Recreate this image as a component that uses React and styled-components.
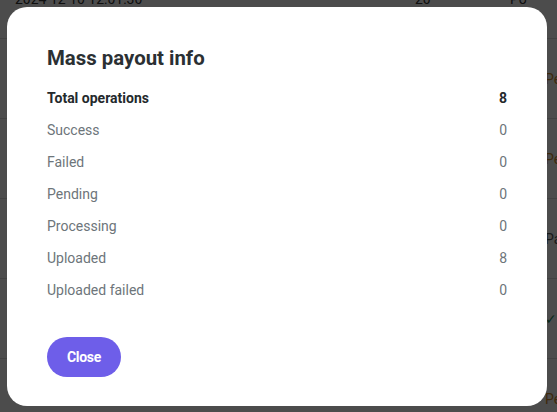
import React from "react";
import styled, { createGlobalStyle } from "styled-components";

const Global = createGlobalStyle`
  html, body { margin: 0; padding: 0; background: #fff; }
  body { font-family: Roboto, "Liberation Sans", Arial, sans-serif; overflow: hidden; }
  * { box-sizing: border-box; }
`;

const Page = styled.div`
  width: 557px;
  height: 412px;
  overflow: hidden;
`;

const Table = styled.div`
  margin-top: -41px;
  display: flex;
  flex-direction: column;
`;

const BgRow = styled.div`
  height: 80px;
  border-bottom: 1px solid #dcdcdc;
  display: grid;
  grid-template-columns: 400px 130px 1fr;
  align-items: center;
  padding-left: 15px;
  font-size: 14px;
  color: #333;
  white-space: nowrap;
`;

const Status = styled.span`
  color: ${(p) => p.$color || "#333"};
  margin-left: ${(p) => p.$shift || 0}px;
`;

const Overlay = styled.div`
  position: fixed;
  inset: 0;
  background: rgba(0, 0, 0, 0.7);
  display: flex;
  padding: 7px 10px 6px 7px;
`;

const Modal = styled.div`
  flex: 1;
  background: #fff;
  border-radius: 20px;
  padding: 39px 40px 29px 40px;
  display: flex;
  flex-direction: column;
  align-items: flex-start;
`;

const Title = styled.h2`
  margin: 0 0 12px;
  font-size: 20.4px;
  line-height: 24px;
  font-weight: 700;
  color: #2b3033;
`;

const List = styled.div`
  align-self: stretch;
  display: flex;
  flex-direction: column;
`;

const Row = styled.div`
  height: 32px;
  display: flex;
  align-items: center;
  justify-content: space-between;
  font-size: 14px;
  font-weight: ${(p) => (p.$bold ? 700 : 400)};
  color: ${(p) => (p.$bold ? "#24292c" : "#6d757a")};
`;

const Button = styled.button`
  margin-top: 31px;
  height: 40px;
  width: 74px;
  border: none;
  border-radius: 20px;
  background: #6e5ee9;
  color: #fff;
  font-family: Roboto, "Liberation Sans", Arial, sans-serif;
  font-size: 14px;
  font-weight: 700;
  letter-spacing: -0.3px;
  cursor: pointer;
`;

const rows = [
  ["Total operations", 8, true],
  ["Success", 0],
  ["Failed", 0],
  ["Pending", 0],
  ["Processing", 0],
  ["Uploaded", 8],
  ["Uploaded failed", 0],
];

const bg = [
  ["2024 12 10 12:01:30", "20", "Po", "#333", -35],
  ["", "", "Pending", "#d08a2a", 0],
  ["", "", "Pending", "#d08a2a", 0],
  ["", "", "Paid", "#555", 0],
  ["", "", "✓", "#1f8a5a", 0],
  ["", "", "Pending", "#d08a2a", 0],
];

export default function App() {
  return (
    <Page>
      <Global />
      <Table>
        {bg.map(([d, n, s, c, sh], i) => (
          <BgRow key={i}>
            <span>{d}</span>
            <span>{n}</span>
            <Status $color={c} $shift={sh}>{s}</Status>
          </BgRow>
        ))}
      </Table>
      <Overlay>
        <Modal>
          <Title>Mass payout info</Title>
          <List>
            {rows.map(([l, v, b]) => (
              <Row key={l} $bold={b}>
                <span>{l}</span>
                <span>{v}</span>
              </Row>
            ))}
          </List>
          <Button>Close</Button>
        </Modal>
      </Overlay>
    </Page>
  );
}
